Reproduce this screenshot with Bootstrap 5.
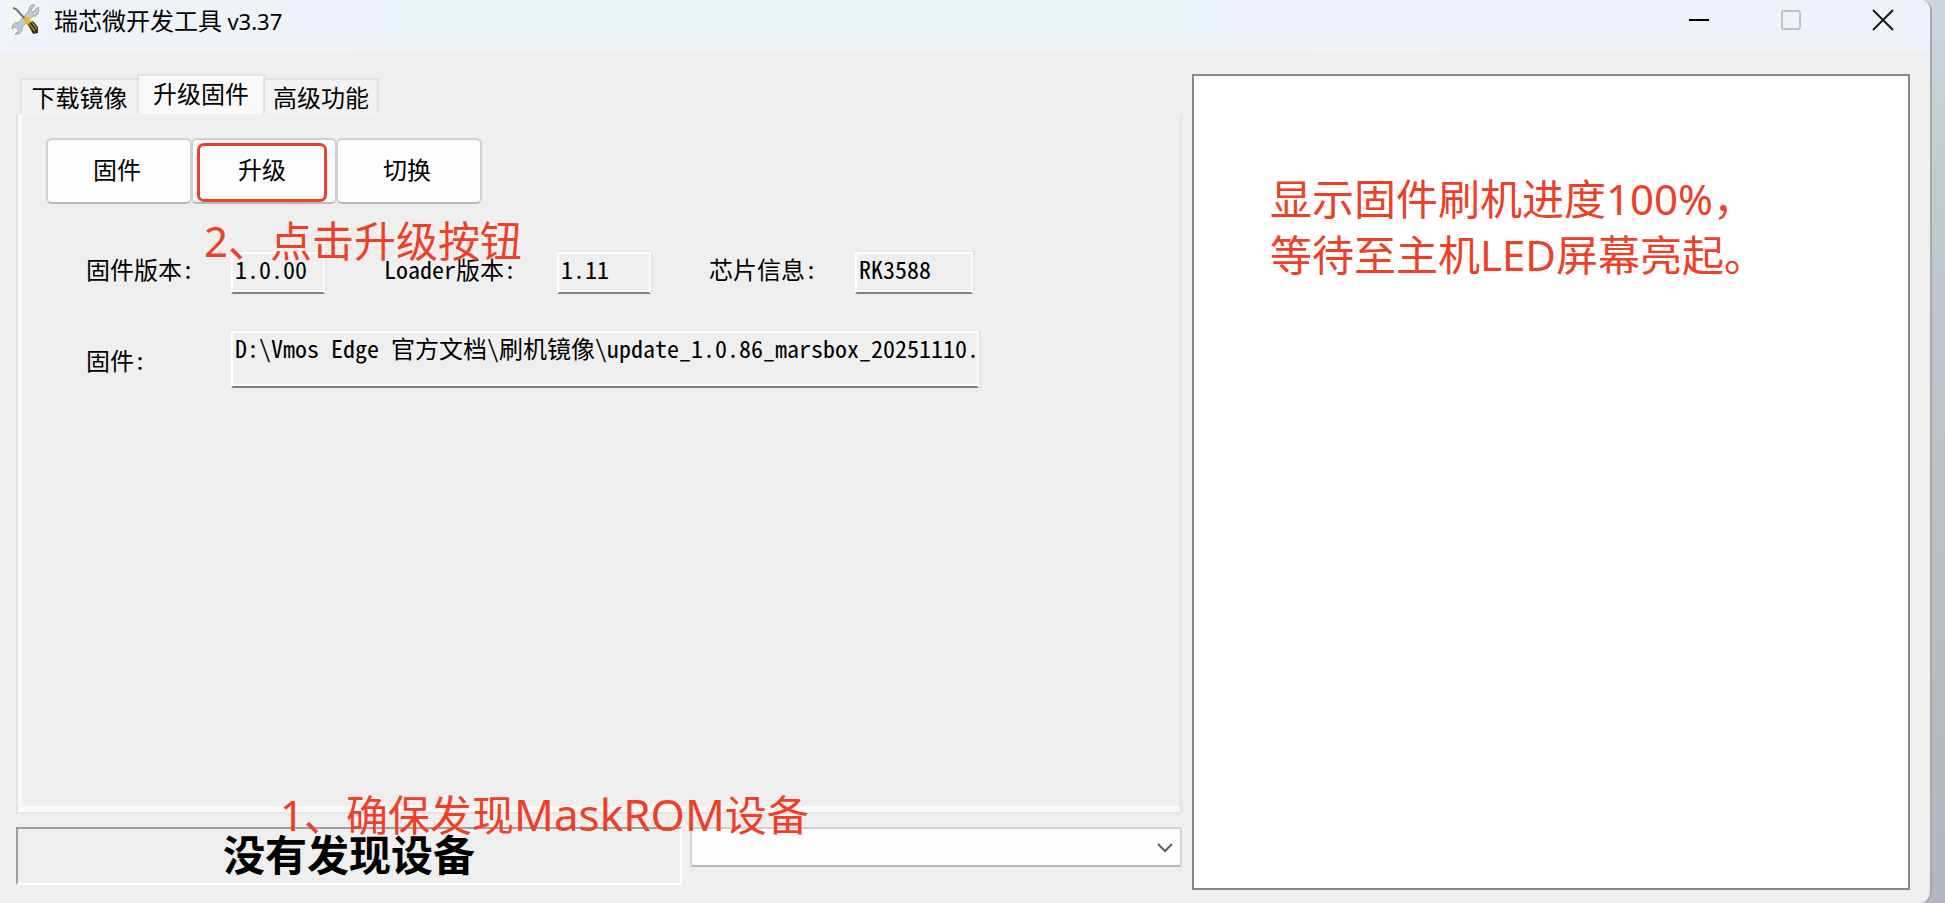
<!DOCTYPE html>
<html lang="zh-CN">
<head>
<meta charset="utf-8">
<meta name="viewport" content="width=device-width, initial-scale=1">
<title>瑞芯微开发工具 v3.37</title>
<link href="https://cdn.jsdelivr.net/npm/bootstrap@5.3.0/dist/css/bootstrap.min.css" rel="stylesheet">
<style>
  body { font-family: "Noto Sans CJK SC", sans-serif; color: #000; background: linear-gradient(#cfd5df 0, #c4cdcf 15%, #c0c6cc 35%, #bcbfc4 60%, #b3b7bd 100%); }
  .desk { padding-right: 13px; }
  .app-window { background: #efefef; border-right: 2px solid #a5a9ac; border-radius: 0 10px 12px 0; overflow: hidden; }
  .titlebar { height: 52px; padding: 0 35px 12px 10px; background: linear-gradient(90deg, #eff3fb 0, #ecf4f7 30%, #ecf4f7 50%, #eef3fa 80%); }
  .titlebar h1 { font-size: 24px; line-height: 32px; font-weight: 400; }
  .titlebar .version { font-family: "Noto Sans", sans-serif; font-size: 22px; }
  .win-btn { border: 0; background: none; padding: 0; width: 24px; height: 24px; line-height: 0; }
  .workspace { display: grid; grid-template-columns: minmax(0, 1166fr) minmax(0, 718fr); gap: 10px; padding: 22px 20px 13px 16px; }
  .fw-tabs { border: 0; padding-left: 6px; height: 40px; align-items: flex-end; }
  .fw-tabs .nav-link { border: 2px solid #e3e3e3; border-bottom: 0; border-radius: 0; margin: 0 0 0 -2px; padding: 0 8px; height: 36px; width: 116px; font-size: 24px; line-height: 34px; color: #000; background: #f2f2f2; white-space: nowrap; text-align: center; }
  .fw-tabs .nav-link:first-child { width: 119px; margin-left: -2px; }
  .fw-tabs .nav-link.active { height: 40px; width: 128px; background: #f9f9f9; color: #000; border-color: #e3e3e3; }
  .fw-panel { border: 2px solid #e4e4e4; border-top: 0; box-shadow: inset 4px 0 #f9f9f9, inset 0 -6px #f9f9f9; padding: 24px 28px; }
  .tool-btn { width: 146px; height: 66px; padding: 0 4px 4px 0; font-size: 24px; border: 2px solid #d0d0d0; border-bottom-color: #bababa; border-radius: 6px; background: #fdfdfd; color: #000; margin-right: -1px; }
  .tool-btn:hover { background: #fff; color: #000; border-color: #bababa; }
  .marked { position: relative; }
  .marked::after { content: ""; position: absolute; inset: 3px 8px 0 4px; border: 3px solid #ee4026; border-radius: 7px; }
  .field-grid { display: grid; grid-template-columns: 145px 153px 173px 152px 146px 124px; row-gap: 37px; margin: 48px 0 0 40px; }
  .field-grid label, .retro { font-size: 24px; font-feature-settings: "hwid"; white-space: pre; color: #000; }
  .field-grid label { line-height: 34px; }
  .retro { height: 42px; width: 94px; border: 2px solid #fff; border-right-color: #f9f9f9; border-bottom: 2px solid #808080; border-radius: 0; background: #efefef; padding: 0 0 10px 2px; box-shadow: 0 -1px #e8e8e8, 2px 0 #e6e6e6, inset 0 -2px #fff; outline: 0; }
  .retro-chip { width: 118px; }
  .retro-path { grid-column: 2 / -1; width: 748px; height: 57px; padding: 0 0 24px 2px; }
  .note { color: #ee4026; font-family: "Noto Sans", "Noto Sans CJK SC", sans-serif; font-size: 42px; line-height: 56px; white-space: nowrap; }
  .note-latin { font-size: 44px; line-height: 1; }
  .over { position: absolute; }
  .note-upgrade { left: 186px; top: 99px; }
  .note-device { left: 262px; bottom: -31px; z-index: 2; }
  .bottom-bar { display: grid; grid-template-columns: minmax(0, 666fr) minmax(0, 492fr); gap: 8px; margin: 13px 0 5px; height: 58px; }
  .status-box { border: 2px solid #a0a0a0; border-right-color: #fff; border-bottom-color: #fff; font-size: 42px; line-height: 48px; font-weight: 700; }
  .device-select { height: 40px; border: 2px solid #d2d2d2; border-bottom-color: #bababa; border-radius: 3px; background: #fdfdfd url("data:image/svg+xml,%3csvg xmlns='http://www.w3.org/2000/svg' width='18' height='18'%3e%3cpath d='M2 6l7 7 7-7' fill='none' stroke='%23606060' stroke-width='2'/%3e%3c/svg%3e") no-repeat right 6px center / 18px 18px; }
  .log-box { border: 2px solid #828790; background: #fff; padding: 95px 76px; }
</style>
</head>
<body>
<div class="desk min-vh-100 d-flex">
  <main class="app-window flex-grow-1 d-flex flex-column">
    <header class="titlebar d-flex align-items-center justify-content-between">
      <div class="d-flex align-items-center">
        <svg width="32" height="32" viewBox="0 0 32 32" aria-hidden="true">
          <rect width="32" height="32" fill="#f5f5f5"/>
          <path d="M28 3l-5 5-2-2 4-5c-4-1-7 2-6 6L8 19c-4-1-6 2-6 6l3-2 3 2v3l-3 2c4 1 8-2 7-7l11-11c4 1 7-3 5-9z" fill="#c3c9d3" stroke="#9ba4b2" stroke-width="1"/>
          <path d="M3 4l3 1 10 11" fill="none" stroke="#70757c" stroke-width="2"/>
          <path d="M13 15l4-3 11 12-1 5-5-1z" fill="#eab92c"/>
          <path d="M18 20l5-3 5 6v6l-5 1z" fill="#34311f"/>
          <path d="M18 18l7 9M21 17l6 8" stroke="#e8bd35" stroke-width="1"/>
        </svg>
        <h1 class="mb-0 ms-2 ps-1">瑞芯微开发工具 <span class="version">v3.37</span></h1>
      </div>
      <div class="d-flex align-items-center gap-5">
        <button class="win-btn me-3" type="button" aria-label="最小化"><svg width="24" height="24"><path d="M2 12h20" stroke="#000" stroke-width="2"/></svg></button>
        <button class="win-btn ms-1 me-3" type="button" aria-label="最大化" disabled><svg width="24" height="24"><rect x="3" y="3" width="18" height="18" rx="2" fill="none" stroke="#bfc2c6" stroke-width="2"/></svg></button>
        <button class="win-btn ms-1" type="button" aria-label="关闭"><svg width="24" height="24"><path d="M2 2l20 20M22 2L2 22" stroke="#191919" stroke-width="2"/></svg></button>
      </div>
    </header>
    <div class="workspace flex-grow-1">
      <section class="d-flex flex-column">
        <nav class="nav nav-tabs fw-tabs">
          <a class="nav-link" href="#download">下载镜像</a>
          <a class="nav-link active" href="#upgrade" aria-current="page">升级固件</a>
          <a class="nav-link" href="#advanced">高级功能</a>
        </nav>
        <div class="fw-panel flex-grow-1 position-relative">
          <div class="d-flex">
            <button class="btn tool-btn" type="button">固件</button>
            <button class="btn tool-btn marked" type="button">升级</button>
            <button class="btn tool-btn" type="button">切换</button>
          </div>
          <form class="field-grid">
            <label for="fwVersion">固件版本:</label>
            <input class="retro" id="fwVersion" value="1.0.00" readonly>
            <label for="loaderVersion">Loader版本:</label>
            <input class="retro" id="loaderVersion" value="1.11" readonly>
            <label for="chipInfo">芯片信息:</label>
            <input class="retro retro-chip" id="chipInfo" value="RK3588" readonly>
            <label class="align-self-center" for="fwPath">固件:</label>
            <input class="retro retro-path" id="fwPath" value="D:\Vmos Edge 官方文档\刷机镜像\update_1.0.86_marsbox_20251110." readonly>
          </form>
          <div class="note over note-upgrade">2、点击升级按钮</div>
          <div class="note over note-device">1、确保发现<span class="note-latin">MaskROM</span>设备</div>
        </div>
        <div class="bottom-bar">
          <div class="status-box text-center" role="status">没有发现设备</div>
          <select class="form-select device-select" aria-label="设备"><option></option></select>
        </div>
      </section>
      <section class="log-box">
        <p class="note mb-0">显示固件刷机进度100%，<br>等待至主机LED屏幕亮起。</p>
      </section>
    </div>
  </main>
</div>
<script src="https://cdn.jsdelivr.net/npm/bootstrap@5.3.0/dist/js/bootstrap.bundle.min.js"></script>
</body>
</html>
